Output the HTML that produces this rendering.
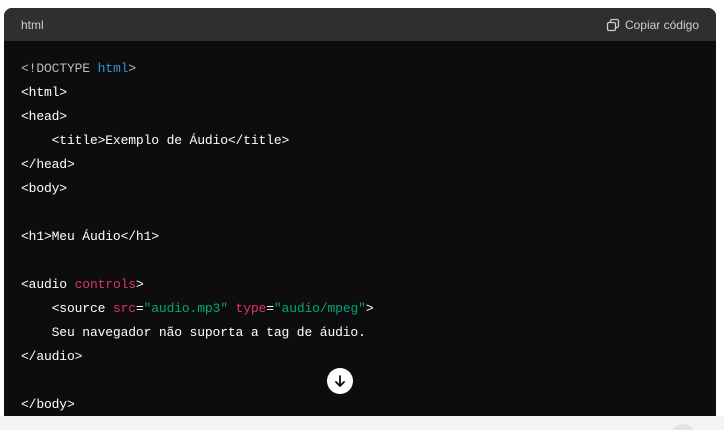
<!DOCTYPE html>
<html><head><meta charset="utf-8"><style>
html,body{margin:0;padding:0;background:#fff;width:724px;height:430px;overflow:hidden;position:relative;font-family:"Liberation Sans",sans-serif}
.box{position:absolute;left:4px;top:8px;width:712px;height:420px;border-radius:8px;overflow:hidden;background:#0d0d0d}
.hd{height:33px;background:#2f2f2f;color:#cdcdcd;font-size:12px;display:flex;align-items:center;justify-content:space-between;padding:0 17px}
.cp{display:flex;align-items:center;gap:5px}
pre{margin:0;padding:16px 17px;font-family:"Liberation Mono",monospace;font-size:13px;line-height:24px;color:#fff;letter-spacing:-0.14px}
.g{color:#bbb}.b{color:#2e95d3}.p{color:#df3079}.s{color:#00a67d}
.bar{position:absolute;left:0;top:416px;width:724px;height:14px;background:#f4f4f4}
.circ{position:absolute;left:670px;top:424px;width:26px;height:26px;border-radius:50%;background:#e3e3e3}
.btn{position:absolute;left:327px;top:368px;width:26px;height:26px;border-radius:50%;background:#fff;display:flex;align-items:center;justify-content:center}
</style></head><body>
<div class="box">
<div class="hd"><span>html</span><span class="cp"><svg width="14" height="14" viewBox="0 0 14 14" fill="none" stroke="#cdcdcd" stroke-width="1.3"><rect x="1.5" y="4.5" width="8" height="8" rx="1.5"/><path d="M4.5 4.5V3a1.5 1.5 0 0 1 1.5-1.5h5A1.5 1.5 0 0 1 12.5 3v5a1.5 1.5 0 0 1-1.5 1.5H9.5"/></svg>Copiar código</span></div>
<pre><span class="g">&lt;!DOCTYPE</span> <span class="b">html</span><span class="g">&gt;</span>
&lt;html&gt;
&lt;head&gt;
    &lt;title&gt;Exemplo de Áudio&lt;/title&gt;
&lt;/head&gt;
&lt;body&gt;

&lt;h1&gt;Meu Áudio&lt;/h1&gt;

&lt;audio <span class="p">controls</span>&gt;
    &lt;source <span class="p">src</span>=<span class="s">"audio.mp3"</span> <span class="p">type</span>=<span class="s">"audio/mpeg"</span>&gt;
    Seu navegador não suporta a tag de áudio.
&lt;/audio&gt;

&lt;/body&gt;</pre>
</div>
<div class="btn"><svg width="14" height="14" viewBox="0 0 14 14" fill="none" stroke="#0d0d0d" stroke-width="1.8" stroke-linecap="round" stroke-linejoin="round"><path d="M7 2v10M3 8l4 4 4-4"/></svg></div>
<div class="bar"></div>
<div class="circ"></div>
</body></html>
